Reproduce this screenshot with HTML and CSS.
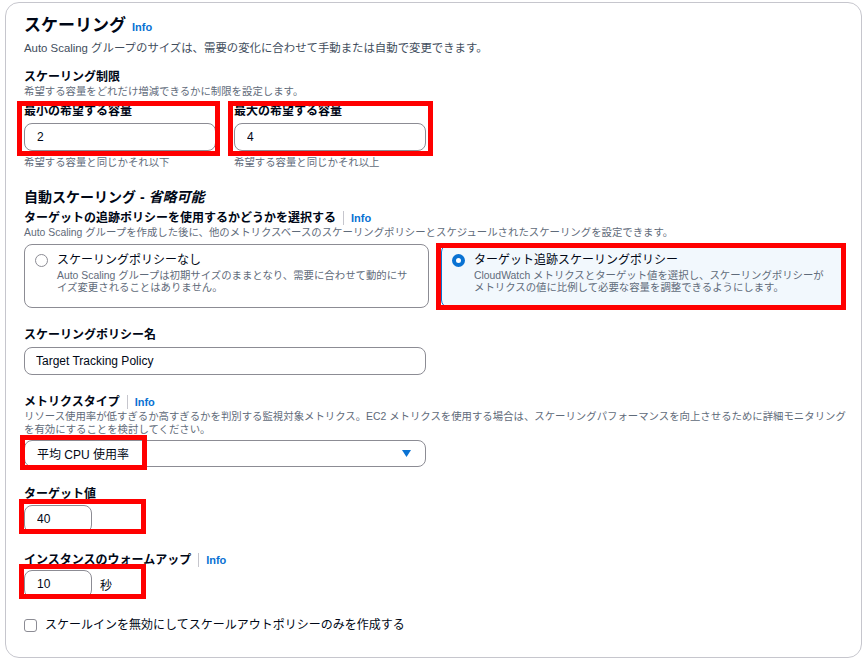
FILE: index.html
```html
<!DOCTYPE html>
<html lang="ja">
<head>
    <meta charset="UTF-8">
    <meta name="viewport" content="width=device-width, initial-scale=1.0">
    <title>スケーリング</title>
    <link rel="stylesheet" href="styles.css">
</head>
<body>
    <div class="card">
        <h2 class="title">スケーリング <a class="info" href="#">Info</a></h2>
        <p class="desc">Auto Scaling グループのサイズは、需要の変化に合わせて手動または自動で変更できます。</p>

        <h3 class="group-title">スケーリング制限</h3>
        <p class="hint">希望する容量をどれだけ増減できるかに制限を設定します。</p>
        <div class="capacity">
            <div class="field">
                <div class="mark mark-min">
                    <label class="field-label">最小の希望する容量</label>
                    <input class="input" type="text" value="2" readonly>
                </div>
                <p class="help">希望する容量と同じかそれ以下</p>
            </div>
            <div class="field">
                <div class="mark mark-max">
                    <label class="field-label">最大の希望する容量</label>
                    <input class="input" type="text" value="4" readonly>
                </div>
                <p class="help">希望する容量と同じかそれ以上</p>
            </div>
        </div>

        <h3 class="section-title">自動スケーリング - <em>省略可能</em></h3>
        <div class="label-row tight">ターゲットの追跡ポリシーを使用するかどうかを選択する<span class="sep"></span><a class="info" href="#">Info</a></div>
        <p class="hint">Auto Scaling グループを作成した後に、他のメトリクスベースのスケーリングポリシーとスケジュールされたスケーリングを設定できます。</p>
        <div class="tiles">
            <label class="tile">
                <span class="radio"></span>
                <span class="tile-body">
                    <span class="tile-title">スケーリングポリシーなし</span>
                    <span class="tile-desc">Auto Scaling グループは初期サイズのままとなり、需要に合わせて動的にサイズ変更されることはありません。</span>
                </span>
            </label>
            <label class="tile selected mark mark-tile">
                <span class="radio checked"></span>
                <span class="tile-body">
                    <span class="tile-title">ターゲット追跡スケーリングポリシー</span>
                    <span class="tile-desc">CloudWatch メトリクスとターゲット値を選択し、スケーリングポリシーがメトリクスの値に比例して必要な容量を調整できるようにします。</span>
                </span>
            </label>
        </div>

        <div class="form-field">
            <div class="label-row">スケーリングポリシー名</div>
            <input class="input wide" type="text" value="Target Tracking Policy" readonly>
        </div>

        <div class="form-field">
            <div class="label-row">メトリクスタイプ<span class="sep"></span><a class="info" href="#">Info</a></div>
            <p class="hint">リソース使用率が低すぎるか高すぎるかを判別する監視対象メトリクス。EC2 メトリクスを使用する場合は、スケーリングパフォーマンスを向上させるために詳細モニタリングを有効にすることを検討してください。</p>
            <div class="select mark mark-short">
                <span>平均 CPU 使用率</span>
                <svg width="9" height="7" viewBox="0 0 9 7"><path d="M0 0 H9 L4.5 7 Z" fill="#0972d3"/></svg>
            </div>
        </div>

        <div class="form-field">
            <div class="label-row">ターゲット値</div>
            <div class="unit-row mark mark-short">
                <input class="input small" type="text" value="40" readonly>
            </div>
        </div>

        <div class="form-field warmup">
            <div class="label-row">インスタンスのウォームアップ<span class="sep"></span><a class="info" href="#">Info</a></div>
            <div class="unit-row mark mark-short">
                <input class="input small" type="text" value="10" readonly>
                <span class="unit">秒</span>
            </div>
        </div>

        <label class="check-row">
            <span class="checkbox"></span>
            スケールインを無効にしてスケールアウトポリシーのみを作成する
        </label>
    </div>
</body>
</html>
```

FILE: styles.css
```css
* {
    margin: 0;
    padding: 0;
    box-sizing: border-box;
}

body {
    font-family: "Liberation Sans", "Noto Sans CJK JP", sans-serif;
    color: #000716;
    background-color: #fff;
}

.card {
    margin: 2px 2px 0 5px;
    height: 656px;
    border: 1px solid #c6c6cd;
    border-radius: 14px;
    padding: 12px 15px 0 18px;
    background-color: #fff;
}

.title {
    display: flex;
    align-items: baseline;
    gap: 6px;
    font-size: 17px;
    line-height: 22px;
    font-weight: bold;
}

.info {
    font-size: 11px;
    font-weight: bold;
    color: #0972d3;
    text-decoration: none;
}

.desc {
    margin-top: 3px;
    font-size: 11.4px;
    line-height: 15px;
    color: #414d5c;
}

.group-title {
    margin-top: 13px;
    font-size: 12px;
    line-height: 16px;
    font-weight: bold;
}

.hint {
    font-size: 10.4px;
    line-height: 13px;
    color: #5f6b7a;
}

.capacity {
    display: grid;
    grid-template-columns: 192px 192px;
    column-gap: 18px;
    margin-top: 5px;
}

.field-label {
    display: block;
    margin-bottom: 4px;
    font-size: 12px;
    line-height: 16px;
    font-weight: bold;
}

.input {
    display: block;
    width: 100%;
    height: 28px;
    padding: 0 12px;
    border: 1px solid #8c8c94;
    border-radius: 8px;
    font: inherit;
    font-size: 12px;
    color: #000716;
    background-color: #fff;
    outline: none;
}

.input.wide {
    width: 402px;
    padding-left: 11px;
}

.input.small {
    width: 68px;
}

.help {
    margin-top: 5px;
    font-size: 10.4px;
    line-height: 13px;
    color: #5f6b7a;
}

.section-title {
    margin-top: 19px;
    font-size: 14px;
    line-height: 18px;
    font-weight: bold;
}

.label-row {
    display: flex;
    align-items: center;
    padding-top: 2px;
    font-size: 12px;
    line-height: 16px;
    font-weight: bold;
}

.label-row.tight {
    margin-top: 2px;
}

.sep {
    width: 1px;
    height: 14px;
    margin: 0 7px;
    background-color: #c6c6cd;
}

.tiles {
    display: grid;
    grid-template-columns: 1fr 1fr;
    gap: 12px;
    margin-top: 5px;
}

.tile {
    display: flex;
    align-items: flex-start;
    gap: 9px;
    height: 64px;
    padding: 7px 14px 7px 10px;
    border: 1px solid #8c8c94;
    border-radius: 8px;
}

.tile.selected {
    background-color: #f2f8fd;
    border-color: #0972d3;
}

.radio {
    flex-shrink: 0;
    width: 13px;
    height: 13px;
    margin-top: 2px;
    border: 1.5px solid #8c8c94;
    border-radius: 50%;
    background-color: #fff;
}

.radio.checked {
    border: 4px solid #0972d3;
}

.tile-title {
    display: block;
    font-size: 12px;
    line-height: 16px;
}

.tile-desc {
    display: block;
    margin-top: 2px;
    font-size: 10.4px;
    line-height: 12px;
    color: #5f6b7a;
}

.form-field {
    margin-top: 17px;
}

.form-field .input.wide {
    margin-top: 4px;
}

.select {
    display: flex;
    justify-content: space-between;
    align-items: center;
    width: 402px;
    height: 27px;
    margin-top: 4px;
    padding: 0 14px 0 12px;
    border: 1px solid #8c8c94;
    border-radius: 8px;
    font-size: 12px;
}

.unit-row {
    display: flex;
    align-items: center;
    gap: 8px;
    width: 68px;
    margin-top: 3px;
    font-size: 12px;
}

.warmup .unit-row {
    margin-top: 2px;
}

.unit {
    flex-shrink: 0;
}

.check-row {
    display: flex;
    align-items: center;
    gap: 8px;
    margin-top: 19px;
    font-size: 12px;
    line-height: 16px;
}

.checkbox {
    width: 13px;
    height: 13px;
    border: 1px solid #8c8c94;
    border-radius: 3px;
}

/* red annotation frames */
.mark {
    position: relative;
}

.mark::after {
    content: "";
    position: absolute;
    box-sizing: border-box;
    border: 5px solid #f00;
    pointer-events: none;
}

.mark-min::after {
    top: -2px;
    right: -4px;
    bottom: -5px;
    left: -7px;
}

.mark-max::after {
    top: -2px;
    right: -7px;
    bottom: -5px;
    left: -6px;
}

.mark-tile::after {
    top: -2px;
    right: -1px;
    bottom: -3px;
    left: -6px;
}

.mark-short::after {
    top: -6px;
    left: -5px;
    width: 127px;
    height: 35px;
}
```
